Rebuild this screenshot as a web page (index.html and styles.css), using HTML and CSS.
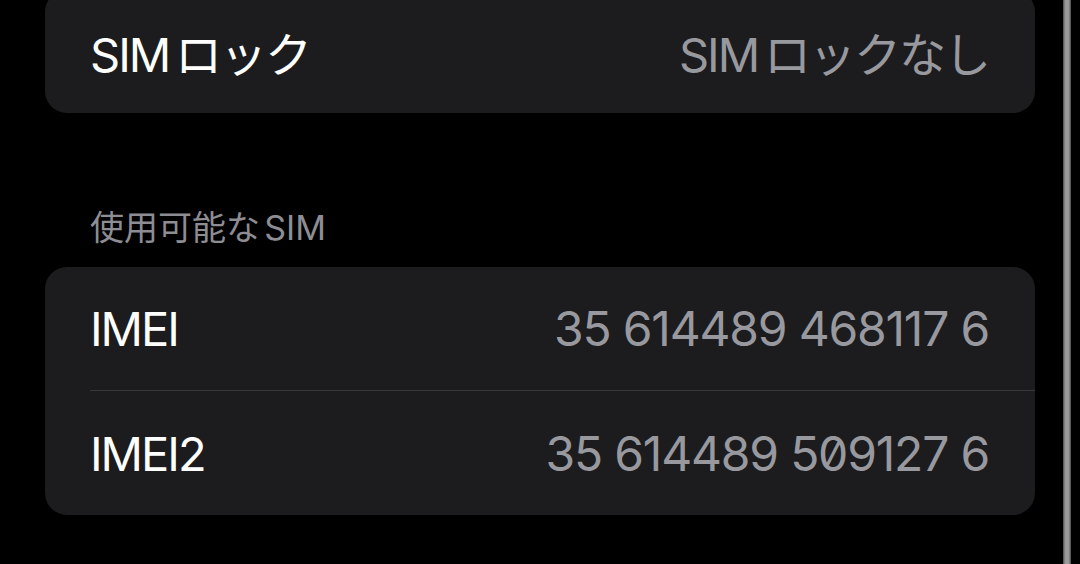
FILE: index.html
```html
<!DOCTYPE html>
<html lang="ja">
    <head>
        <meta charset="UTF-8">
        <meta name="viewport" content="width=device-width, initial-scale=1.0">
        <title>SIM</title>
        <link rel="stylesheet" href="styles.css">
    </head>
    <body>
        <div class="screen">
            <div class="settings">
                <div class="group group-top">
                    <div class="row">
                        <span class="label">SIMロック</span>
                        <span class="value">SIMロックなし</span>
                    </div>
                </div>

                <div class="section-title">使用可能なSIM</div>
                <div class="group">
                    <div class="row">
                        <span class="label">IMEI</span>
                        <span class="value number">35 614489 468117 6</span>
                    </div>
                    <div class="row">
                        <span class="label">IMEI2</span>
                        <span class="value number">35 614489 509127 6</span>
                    </div>
                </div>
            </div>
            <div class="scroll-edge"></div>
        </div>
    </body>
</html>
```

FILE: styles.css
```css
html, body {
    width: 100%;
    height: 100%;
    margin: 0;
    overflow: hidden;
}

body {
    background-color: #000;
    color: #fff;
    font-family: "Inter", "Noto Sans CJK JP", sans-serif;
    /* little gap between latin and kana, like iOS does */
    text-autospace: normal;
}

.screen {
    display: flex;
    height: 100%;
    padding-right: 9px;
    box-sizing: border-box;
}

.settings {
    flex: 1;
    padding: 0 28px 0 45px;
}

.scroll-edge {
    width: 8px;
    background: linear-gradient(to right, #4a4a4a, #9a9a9a 30%, #9a9a9a 70%, #4a4a4a);
}

.group {
    background-color: #1c1c1e;
    border-radius: 22px;
    overflow: hidden;
}

/* first card is cut off by the top of the screen */
.group-top {
    margin-top: -10px;
}

.row {
    display: flex;
    justify-content: space-between;
    align-items: center;
    height: 123px;
    margin-left: 45px;
    padding-right: 46px;
    font-size: 47px;
    letter-spacing: -2px;
}

.row + .row {
    border-top: 1px solid #38383a;
    height: 124px;
}

.value {
    color: #98989f;
}

.number {
    font-size: 48px;
    letter-spacing: -1.2px;
    font-feature-settings: "zero";
}

.section-title {
    margin: 88px 0 17px 45px;
    font-size: 34px;
    color: #8d8d93;
}
```
